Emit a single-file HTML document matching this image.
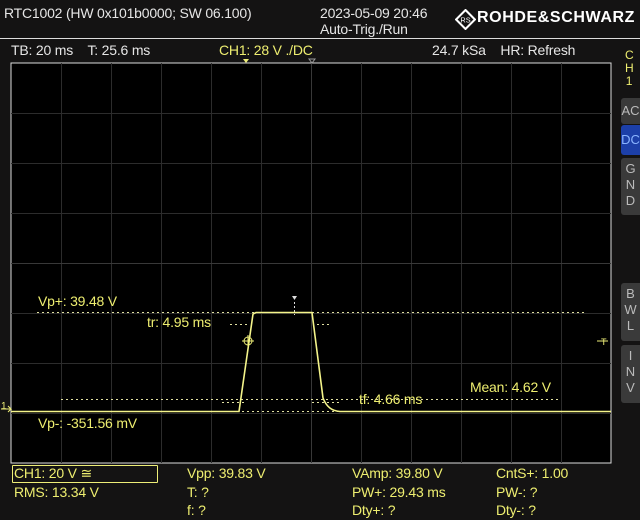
<!DOCTYPE html>
<html><head><meta charset="utf-8"><style>
body{margin:0;width:640px;height:520px;background:#141313;overflow:hidden;position:relative;font-family:"Liberation Sans",sans-serif;}
.t{position:absolute;white-space:nowrap;font-size:14px;color:#e6e6e6;line-height:1;letter-spacing:-0.2px;}
.y{color:#eeee70;}
.btn{position:absolute;left:621px;width:19px;background:#3a3a3a;border-radius:3px 0 0 3px;color:#bbb;font-size:13px;text-align:center;line-height:16px;}
</style></head><body>
<div class="t" style="left:4px;top:6px">RTC1002 (HW 0x101b0000; SW 06.100)</div>
<div class="t" style="left:320px;top:6px">2023-05-09 20:46</div>
<div class="t" style="left:320px;top:22px">Auto-Trig./Run</div>
<svg style="position:absolute;left:455px;top:9px" width="21" height="21" viewBox="0 0 20 20"><path d="M10 1L19 10L10 19L1 10Z" fill="none" stroke="#fff" stroke-width="2"/><text x="10" y="13" font-size="7" fill="#fff" text-anchor="middle" font-family="Liberation Sans">RS</text></svg>
<div class="t" style="left:477px;top:10px;font-weight:bold;font-size:16px;color:#fff;letter-spacing:0.6px">ROHDE&amp;SCHWARZ</div>
<div style="position:absolute;left:0;top:38px;width:640px;height:1px;background:#ddd"></div>
<div class="t" style="left:11px;top:43px">TB: 20 ms&nbsp;&nbsp;&nbsp; T: 25.6 ms</div>
<div class="t y" style="left:219px;top:43px">CH1: 28 V ./DC</div>
<div class="t" style="left:432px;top:43px">24.7 kSa&nbsp;&nbsp;&nbsp; HR: Refresh</div>
<div class="t y" style="left:625px;top:49px;font-size:12px;line-height:13px;text-align:center;width:8px;white-space:normal">C H 1</div>
<div class="btn" style="top:98px;height:26px;line-height:26px">AC</div>
<div class="btn" style="top:125px;height:30px;line-height:30px;background:#1c3fa8;color:#8ab4ff">DC</div>
<div class="btn" style="top:158px;height:57px;padding-top:3px;box-sizing:border-box">G<br>N<br>D</div>
<div class="btn" style="top:283px;height:58px;padding-top:3px;box-sizing:border-box">B<br>W<br>L</div>
<div class="btn" style="top:345px;height:58px;padding-top:3px;box-sizing:border-box">I<br>N<br>V</div>
<svg style="position:absolute;left:0;top:0" width="640" height="520">
<rect x="11" y="63" width="600" height="400" fill="#000" stroke="#ddd" stroke-width="1"/>
<g stroke="#2c2c2c" stroke-width="1">
<path d="M61.5 63V463M111.5 63V463M161.5 63V463M211.5 63V463M261.5 63V463M361.5 63V463M411.5 63V463M461.5 63V463M511.5 63V463M561.5 63V463"/>
<path d="M11 113.5H611M11 163.5H611M11 213.5H611M11 263.5H611M11 313.5H611M11 363.5H611M11 413.5H611"/>
<path d="M311.5 63V463M11 263.5H611" stroke="#383838"/>
</g>
<g stroke="#e0e0a0" stroke-width="1" stroke-dasharray="2,3">
<path d="M37 312.5H586M37 411.5H586M61 399.5H559"/>
<path d="M230 324.5H247M317 324.5H330M222 402.5H247M312 402.5H342"/>
</g>
<path d="M608 341H597" stroke="#ee7" stroke-width="1"/>
<text x="601" y="345" font-size="9" fill="#ee7" font-family="Liberation Sans">T</text>
<path d="M243 59h6l-3 4z" fill="#ee7"/><path d="M309 59h6l-3 4z" fill="none" stroke="#999"/>
<path d="M292 296h5l-2.5 4z" fill="#ddd"/><path d="M294.5 302V315" stroke="#ddd" stroke-dasharray="2,2"/>
<path d="M11 411.5H239L253 314L256 312.5H312L323 398Q328 411 340 411.5H611" fill="none" stroke="#f4f48a" stroke-width="1.6"/>
<circle cx="248" cy="341" r="4" fill="none" stroke="#ee7"/><path d="M242 341h12M248 335v12" stroke="#ee7"/>
<path d="M1 409h10l-3-3M11 409l-3 3" stroke="#ee7" fill="none"/>
<text x="1" y="409" font-size="10" fill="#ee7" font-family="Liberation Sans">1</text>
</svg>
<div class="t y" style="left:38px;top:294px">Vp+: 39.48 V</div>
<div class="t y" style="left:147px;top:315px">tr: 4.95 ms</div>
<div class="t y" style="left:38px;top:416px">Vp-: -351.56 mV</div>
<div class="t y" style="left:359px;top:392px">tf: 4.66 ms</div>
<div class="t y" style="left:470px;top:380px">Mean: 4.62 V</div>
<div style="position:absolute;left:12px;top:465px;width:144px;height:16px;border:1px solid #ee7;border-radius:1px"></div>
<div class="t y" style="left:14px;top:466px">CH1: 20 V ≅</div>
<div class="t y" style="left:14px;top:485px">RMS: 13.34 V</div>
<div class="t y" style="left:187px;top:466px">Vpp: 39.83 V</div>
<div class="t y" style="left:187px;top:485px">T: ?</div>
<div class="t y" style="left:187px;top:503px">f: ?</div>
<div class="t y" style="left:352px;top:466px">VAmp: 39.80 V</div>
<div class="t y" style="left:352px;top:485px">PW+: 29.43 ms</div>
<div class="t y" style="left:352px;top:503px">Dty+: ?</div>
<div class="t y" style="left:496px;top:466px">CntS+: 1.00</div>
<div class="t y" style="left:496px;top:485px">PW-: ?</div>
<div class="t y" style="left:496px;top:503px">Dty-: ?</div>
</body></html>
